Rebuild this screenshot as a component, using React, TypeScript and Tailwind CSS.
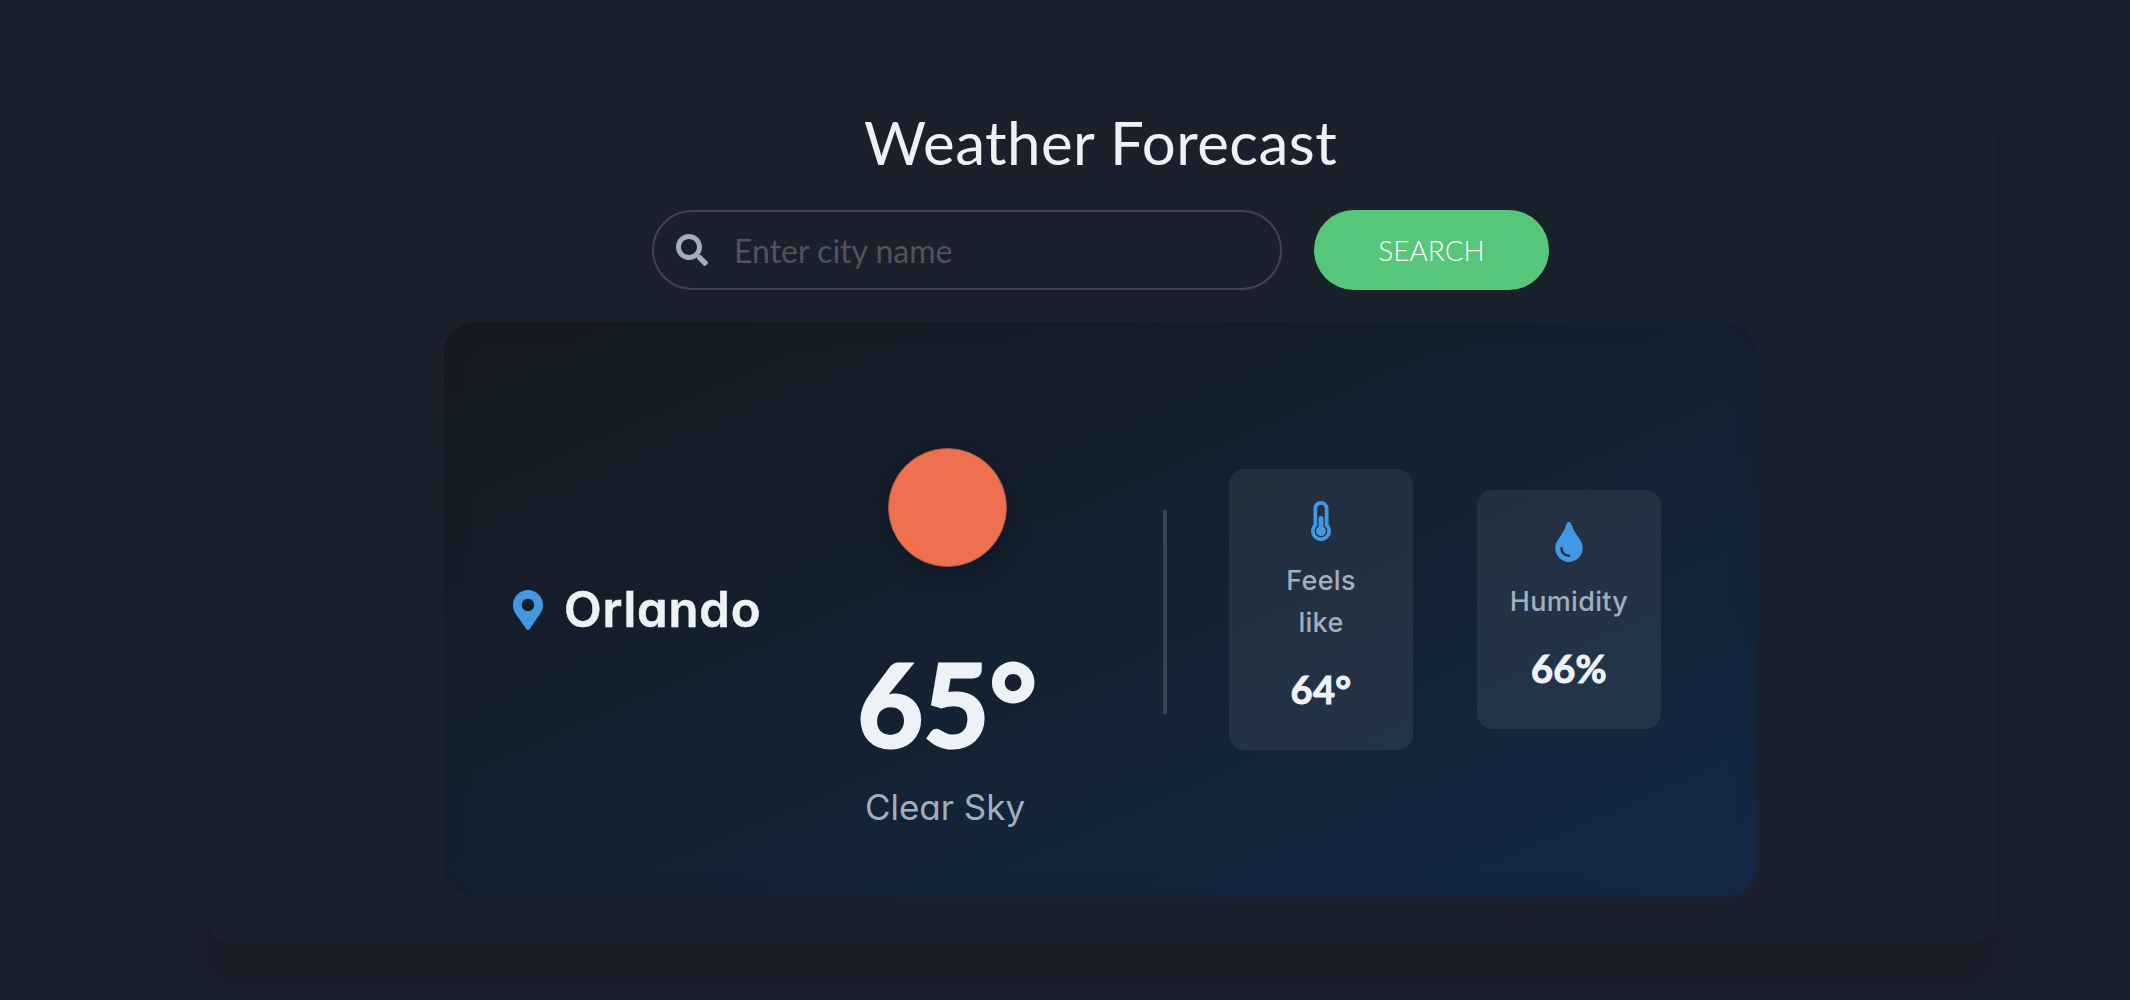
import type { ReactNode } from "react";
import { FaMapMarkerAlt, FaSearch, FaThermometerHalf, FaTint } from "react-icons/fa";

function Stat({ icon, label, children }: { icon: ReactNode; label: string; children: ReactNode }) {
  return (
    <div className="flex w-[184px] flex-col items-center rounded-2xl bg-white/[0.065] pt-8 pb-[37px] text-center">
      {icon}
      <div className="mt-[19px] font-['Inter',sans-serif] text-[27px] leading-[42px] font-medium tracking-[0.3px] whitespace-pre-line text-[#a0aec0] [font-feature-settings:'cv11']">
        {label}
      </div>
      <div className="mt-[21px] flex h-12 items-center text-[38px] leading-[48px] font-bold tracking-[0.3px] text-[#edf2f7] [-webkit-text-stroke:1px_#edf2f7]">{children}</div>
    </div>
  );
}

export default function App() {
  return (
    <div className="h-[1000px] w-[2130px] overflow-hidden bg-[#1a202c] pt-[58px] font-['Lato',sans-serif]">
      <main className="ml-[204px] flex h-[887px] w-[1793px] flex-col items-center gap-8 rounded-[32px] bg-[#1a202c] pt-12 shadow-[0_40px_12px_rgba(0,0,0,0.07)]">
        <h1 className="text-[60px] leading-[72px] tracking-[0.45px] text-[#edf2f7]">Weather Forecast</h1>

        <form className="flex h-20 gap-8" onSubmit={(e) => e.preventDefault()}>
          <label className="flex w-[630px] items-center gap-[26px] rounded-full border-2 border-[#42454f] pl-[22px]">
            <FaSearch className="size-8 text-[#a0aec0]" />
            <input
              className="h-full min-w-0 flex-1 bg-transparent text-[32px] text-[#edf2f7] outline-none placeholder:text-[#50545c]"
              placeholder="Enter city name"
            />
          </label>
          <button className="w-[235px] rounded-full bg-[#57c67a] text-[28px] font-light text-white">SEARCH</button>
        </form>

        <section className="flex h-[575px] w-[1313px] items-center rounded-[32px] bg-[linear-gradient(to_bottom_right,#151a20,#142132_50%,#152a46)] pl-16 shadow-[inset_0_0_30px_rgba(0,0,0,0.07)]">
          <div className="flex w-[284px] items-center gap-4">
            <FaMapMarkerAlt className="size-10 text-[#4299e1]" />
            <h2 className="font-['Inter',sans-serif] text-[49px] leading-[58px] font-semibold tracking-[0.8px] text-[#edf2f7] [-webkit-text-stroke:0.6px_#edf2f7] [font-feature-settings:'cv11']">
              Orlando
            </h2>
          </div>

          <div className="flex w-[310px] flex-col items-center self-start pt-[126px]">
            <div className="size-[119px] rounded-full border border-[#a95844] bg-[#ee704f] shadow-[0_4px_24px_rgba(0,0,0,0.3)]" />
            <div className="mt-[76px] flex h-[120px] text-[114px] leading-[120px] font-bold text-[#edf2f7] [-webkit-text-stroke:3px_#edf2f7]">
              65°
            </div>
            <div className="mt-[22px] mr-1 font-['Inter',sans-serif] text-[35px] leading-[44px] text-[#a0aec0] [font-feature-settings:'cv11']">
              Clear Sky
            </div>
          </div>

          <div className="mt-1 ml-[61px] h-[204px] w-1 bg-[#374354]" />

          <div className="ml-[62px] flex items-center gap-16">
            <Stat icon={<FaThermometerHalf className="size-10 text-[#4299e1]" />} label={"Feels\nlike"}>
              64°
            </Stat>
            <Stat icon={<FaTint className="size-10 text-[#4299e1]" />} label="Humidity">
              66%
            </Stat>
          </div>
        </section>
      </main>
    </div>
  );
}
